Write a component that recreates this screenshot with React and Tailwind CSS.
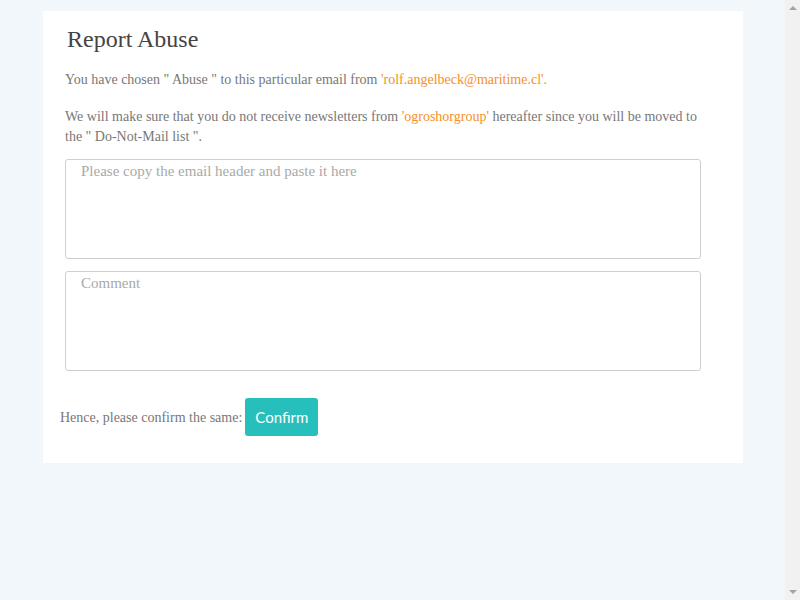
import React from 'react';

const serif = { fontFamily: '"Liberation Serif", "Times New Roman", serif' };

const Scrollbar = () => (
  <div className="w-[15px] h-full bg-[#f1f1f1] flex flex-col justify-between items-center py-[6px]">
    <svg width="8" height="4" viewBox="0 0 8 4">
      <path d="M0 4 L4 0 L8 4 Z" fill="#a3a3a3" />
    </svg>
    <svg width="8" height="4" viewBox="0 0 8 4">
      <path d="M0 0 L8 0 L4 4 Z" fill="#a3a3a3" />
    </svg>
  </div>
);

export default function App() {
  return (
    <div className="h-[600px] w-[800px] flex bg-[#f2f7fb] overflow-hidden" style={serif}>
      <div className="flex-1 pt-[11px] pl-[43px]">
        <div className="w-[700px] bg-white pt-[15px] pb-[27px]">
          <h1 className="ml-[24px] text-[24px] leading-[26px] text-[#444]">Report Abuse</h1>

          <div className="ml-[22px] w-[640px] text-[14px] leading-[20px] text-[#777]">
            <p className="mt-[18px]">
              You have chosen " Abuse " to this particular email from{' '}
              <span className="text-[#f7901e]">'rolf.angelbeck@maritime.cl'.</span>
            </p>
            <p className="mt-[17px] w-[636px]">
              We will make sure that you do not receive newsletters from{' '}
              <span className="text-[#f7901e]">'ogroshorgroup'</span> hereafter since you will be moved to
              the " Do-Not-Mail list ".
            </p>

            <textarea
              className="mt-[12px] block w-[636px] h-[100px] border border-[#cfcfcf] rounded-[3px] px-[15px] pt-[1px] text-[15px] leading-[20px] text-[#555] placeholder:text-[#a9a9a9] resize-none outline-none"
              placeholder="Please copy the email header and paste it here"
            />
            <textarea
              className="mt-[12px] block w-[636px] h-[100px] border border-[#cfcfcf] rounded-[3px] px-[15px] pt-[1px] text-[15px] leading-[20px] text-[#555] placeholder:text-[#a9a9a9] resize-none outline-none"
              placeholder="Comment"
            />
          </div>

          <div className="mt-[27px] ml-[17px] flex items-center gap-[3px] text-[14px] text-[#777]">
            <span>Hence, please confirm the same:</span>
            <button
              className="h-[38px] px-[10px] rounded-[3px] bg-[#26bfbc] text-white text-[15px]"
              style={{ fontFamily: 'Lato, "Open Sans", sans-serif' }}
            >
              Confirm
            </button>
          </div>
        </div>
      </div>
      <Scrollbar />
    </div>
  );
}
